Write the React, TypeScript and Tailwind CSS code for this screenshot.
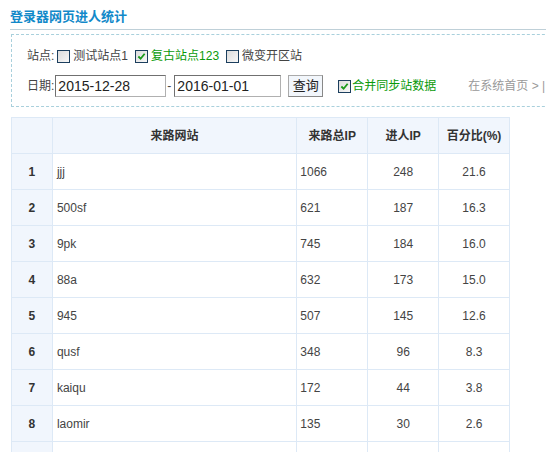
import React from 'react'

const rows = [
  { n: 1, site: 'jjj', total: 1066, ip: 248, pct: '21.6' },
  { n: 2, site: '500sf', total: 621, ip: 187, pct: '16.3' },
  { n: 3, site: '9pk', total: 745, ip: 184, pct: '16.0' },
  { n: 4, site: '88a', total: 632, ip: 173, pct: '15.0' },
  { n: 5, site: '945', total: 507, ip: 145, pct: '12.6' },
  { n: 6, site: 'qusf', total: 348, ip: 96, pct: '8.3' },
  { n: 7, site: 'kaiqu', total: 172, ip: 44, pct: '3.8' },
  { n: 8, site: 'laomir', total: 135, ip: 30, pct: '2.6' },
  { n: 9, site: '', total: '', ip: '', pct: '' },
]

function Check({ on }: { on?: boolean }) {
  return (
    <span className="inline-flex h-[13px] w-[13px] shrink-0 items-center justify-center border border-[#1c3f5e] bg-gradient-to-br from-[#dcdcdc] to-[#f8f8f8]">
      {on && (
        <svg viewBox="0 0 10 10" className="h-[9px] w-[9px]">
          <path d="M1.5 5 L4 7.5 L8.5 2" fill="none" stroke="#1a9a1a" strokeWidth="2" />
        </svg>
      )}
    </span>
  )
}

export default function App() {
  const font = { fontFamily: '"Liberation Sans", "Noto Sans CJK SC", sans-serif' }
  return (
    <div className="h-[452px] w-[546px] overflow-hidden bg-white text-[12px] text-[#444]" style={font}>
      <div className="w-[620px] pl-[10px] pt-[9px]">
        {/* Title */}
        <div className="border-b border-[#bfd0d8] pb-[4px]">
          <h1 className="text-[13px] font-bold leading-[16px] text-[#1289c9]">登录器网页进人统计</h1>
        </div>

        {/* Filter box */}
        <div className="ml-px mt-[4px] h-[73px] border-b border-l border-t border-dashed border-[#a9d0dc] pl-[15px] pt-[12px]">
          <div className="flex h-[18px] items-center gap-[3px] text-[#444]">
            <span>站点:</span>
            <Check />
            <span className="mr-[4px]">测试站点1</span>
            <Check on />
            <span className="mr-[4px] text-[#0a9a0a]">复古站点123</span>
            <Check />
            <span>微变开区站</span>
          </div>
          <div className="mt-[10px] flex h-[22px] items-center">
            <span>日期:</span>
            <input
              readOnly
              value="2015-12-28"
              className="ml-px h-[22px] w-[111px] border border-[#b0b0b0] border-l-[#707070] border-t-[#707070] bg-white px-[2px] text-[14px] text-[#222] outline-none"
            />
            <span className="mx-px">-</span>
            <input
              readOnly
              value="2016-01-01"
              className="ml-[2px] h-[22px] w-[107px] border border-[#b0b0b0] border-l-[#707070] border-t-[#707070] bg-white px-[2px] text-[14px] text-[#222] outline-none"
            />
            <button className="ml-[7px] h-[22px] w-[35px] border border-[#aaa] border-b-[#888] border-r-[#888] bg-[#f2f6fb] text-[13px] text-[#222]">
              查询
            </button>
            <span className="ml-[15px] flex items-center gap-[1px] text-[#0a9a0a]">
              <Check on />
              合并同步站数据
            </span>
            <span className="ml-[32px] whitespace-nowrap text-[#999]">在系统首页 &gt; |</span>
          </div>
        </div>

        {/* Table */}
        <table className="ml-px mt-[10px] w-[499px] border-collapse border border-[#dde9f6] text-[12px]">
          <thead>
            <tr className="h-[36px] bg-[#f1f6fd] font-bold text-[#333]">
              <th className="w-[41px] border border-[#dde9f6]"></th>
              <th className="w-[245px] border border-[#dde9f6]">来路网站</th>
              <th className="w-[71px] border border-[#dde9f6]">来路总IP</th>
              <th className="w-[71px] border border-[#dde9f6]">进人IP</th>
              <th className="w-[71px] border border-[#dde9f6]">百分比(%)</th>
            </tr>
          </thead>
          <tbody>
            {rows.map((r) => (
              <tr key={r.n} className="h-[36px]">
                <td className="border border-[#dde9f6] bg-[#f1f6fd] text-center font-bold text-[#333]">{r.n <= 8 ? r.n : ''}</td>
                <td className="border border-[#dde9f6] pl-[4px]">{r.site}</td>
                <td className="border border-[#dde9f6] pl-[3px]">{r.total}</td>
                <td className="border border-[#dde9f6] text-center">{r.ip}</td>
                <td className="border border-[#dde9f6] text-center">{r.pct}</td>
              </tr>
            ))}
          </tbody>
        </table>
      </div>
    </div>
  )
}
